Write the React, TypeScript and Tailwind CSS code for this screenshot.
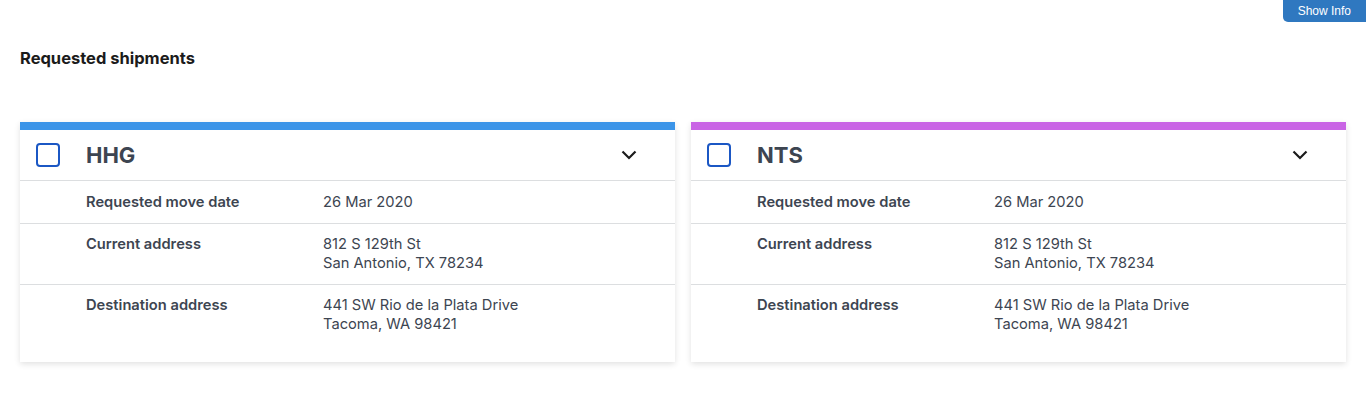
import React from "react";

type Shipment = {
  code: string;
  color: string;
};

const shipments: Shipment[] = [
  { code: "HHG", color: "bg-[#3b94e8]" },
  { code: "NTS", color: "bg-[#c964e5]" },
];

const rows = [
  { label: "Requested move date", lines: ["26 Mar 2020"] },
  { label: "Current address", lines: ["812 S 129th St", "San Antonio, TX 78234"] },
  { label: "Destination address", lines: ["441 SW Rio de la Plata Drive", "Tacoma, WA 98421"] },
];

const ShipmentCard = ({ shipment }: { shipment: Shipment }) => {
  return (
    <div className="flex-1 bg-white shadow-[0_2px_6px_rgba(0,0,0,0.12)] pb-[17px]">
      <div className={`h-2 ${shipment.color}`} />
      {/* Header row */}
      <div className="flex items-center h-[51px] border-b border-[#dcdee0] pl-4 pr-[38px]">
        <span className="w-6 h-6 border-2 border-[#1b57c4] rounded-[4px] mr-[26px]" />
        <h2 className="flex-1 text-[22px] font-bold text-[#3d4551]">{shipment.code}</h2>
        <svg width="16" height="10" viewBox="0 0 16 10" fill="none">
          <path d="M1.5 1.5 L8 8 L14.5 1.5" stroke="#1b1b1b" strokeWidth="2.2" />
        </svg>
      </div>
      {rows.map((row, i) => (
        <div
          key={row.label}
          className={`flex pb-[11px] text-[14.7px] leading-[19px] text-[#3d4551] ${
            i === 0 ? "pt-[12px]" : "pt-[11px]"
          } ${i < rows.length - 1 ? "border-b border-[#dcdee0]" : ""}`}
        >
          <div className="w-[303px] pl-[66px] font-semibold">{row.label}</div>
          <div>
            {row.lines.map((line) => (
              <div key={line}>{line}</div>
            ))}
          </div>
        </div>
      ))}
    </div>
  );
};

export default function App() {
  return (
    <div className="relative min-h-[414px] bg-white px-5 font-['Inter',sans-serif]">
      <button className="absolute top-0 right-0 h-[22px] px-[15px] bg-[#2f78c0] text-white text-xs rounded-bl-[5px] font-['Liberation_Sans',sans-serif]">
        Show Info
      </button>
      <h1 className="pt-[48px] text-[16.5px] font-bold text-[#1b1b1b] leading-5">Requested shipments</h1>
      <div className="flex gap-4 mt-[54px]">
        {shipments.map((s) => (
          <ShipmentCard key={s.code} shipment={s} />
        ))}
      </div>
    </div>
  );
}
